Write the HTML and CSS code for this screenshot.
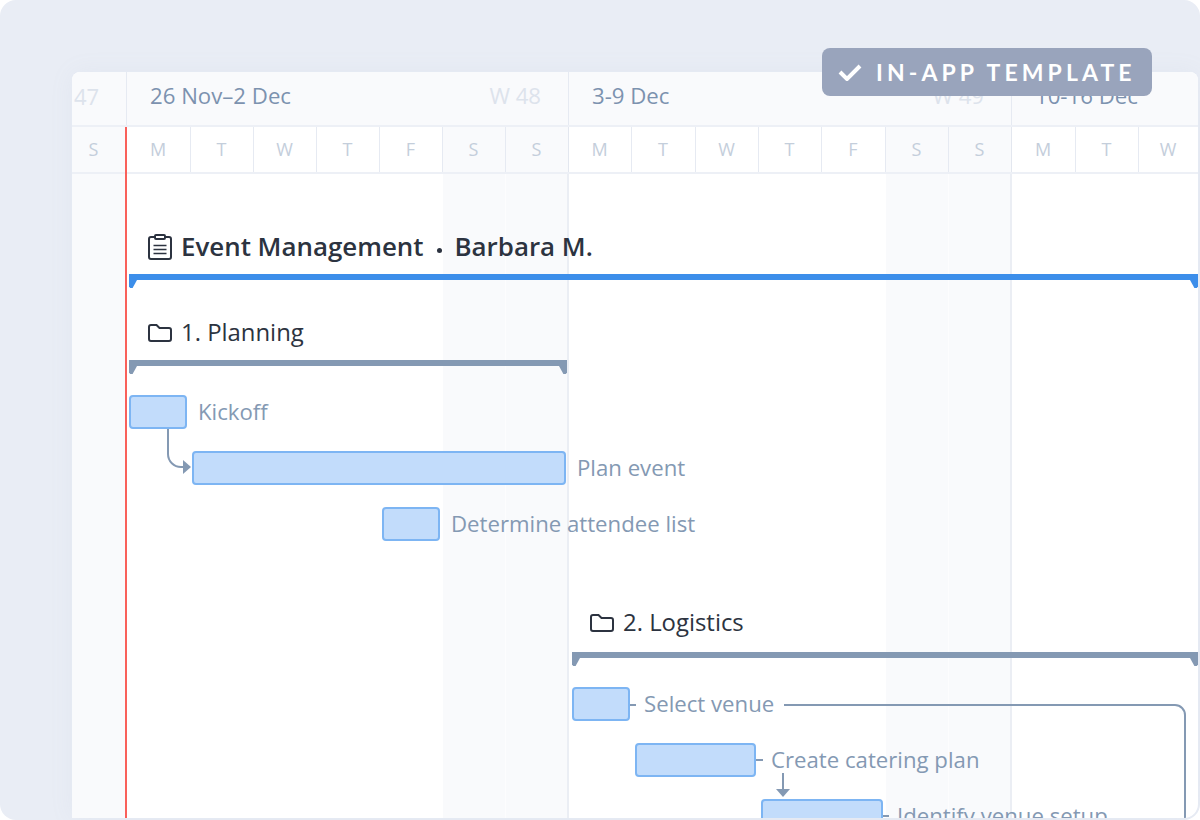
FILE: index.html
```html
<!DOCTYPE html>
<html lang="en">
<head>
<meta charset="utf-8">
<title>Event Management template</title>
<link rel="stylesheet" href="styles.css">
</head>
<body>
<main class="stage">
  <section class="chart">
    <div class="weeks">
      <div class="week week-stub"><span class="week-no">47</span></div>
      <div class="week"><span class="week-name">26 Nov–2 Dec</span><span class="week-no">W 48</span></div>
      <div class="week"><span class="week-name">3-9 Dec</span><span class="week-no">W 49</span></div>
      <div class="week week-last"><span class="week-name">10-16 Dec</span></div>
    </div>
    <div class="days">
      <div class="day day-off day-stub month-end">S</div>
      <div class="day">M</div><div class="day">T</div><div class="day">W</div><div class="day">T</div><div class="day">F</div><div class="day day-off">S</div><div class="day day-off month-end">S</div>
      <div class="day">M</div><div class="day">T</div><div class="day">W</div><div class="day">T</div><div class="day">F</div><div class="day day-off">S</div><div class="day day-off month-end">S</div>
      <div class="day">M</div><div class="day">T</div><div class="day">W</div>
    </div>
    <div class="timeline">
      <div class="columns">
        <div class="col col-stub"></div>
        <div class="col"></div><div class="col"></div><div class="col"></div><div class="col"></div><div class="col"></div><div class="col col-off"></div><div class="col col-off col-end"></div>
        <div class="col"></div><div class="col"></div><div class="col"></div><div class="col"></div><div class="col"></div><div class="col col-off"></div><div class="col col-off col-end"></div>
        <div class="col"></div><div class="col"></div><div class="col"></div>
      </div>

      <svg class="links" viewBox="72 174 1126 644" aria-hidden="true">
        <path class="link" d="M168 429V454a13 13 0 0 0 13 13H185"/>
        <path class="head" d="M183 460L191 467L183 474Z"/>
        <path class="link" d="M630 705H636M784 705H1175a10 10 0 0 1 10 10V818"/>
        <path class="link" d="M756 760H763M883 816H889"/>
        <path class="link" d="M783 773V790"/>
        <path class="head" d="M776 789H790L783 797Z"/>
      </svg>

      <h2 class="heading project">
        <svg class="ico ico-board" viewBox="0 0 24 26" aria-hidden="true">
          <path d="M7 3H3a2 2 0 0 0-2 2v18a2 2 0 0 0 2 2h18a2 2 0 0 0 2-2V5a2 2 0 0 0-2-2h-4"/>
          <rect x="7" y="1" width="10" height="4" rx="1"/>
          <path class="ico-lines" d="M5.5 11.5H18.5M5.5 15.5H18.5M5.5 19.5H18.5"/>
        </svg>
        <span>Event Management</span><span class="sep"></span><span>Barbara M.</span>
      </h2>
      <div class="summary summary-project"></div>

      <h3 class="heading group group-one">
        <svg class="ico ico-folder" viewBox="0 0 24 18" aria-hidden="true"><path d="M1 3a2 2 0 0 1 2-2h5.5l3 3H21a2 2 0 0 1 2 2v9a2 2 0 0 1-2 2H3a2 2 0 0 1-2-2Z"/></svg>
        <span>1. Planning</span>
      </h3>
      <div class="summary summary-one"></div>

      <div class="task t-kickoff"><div class="bar"></div><span>Kickoff</span></div>
      <div class="task t-plan"><div class="bar"></div><span>Plan event</span></div>
      <div class="task t-attendee"><div class="bar"></div><span>Determine attendee list</span></div>

      <h3 class="heading group group-two">
        <svg class="ico ico-folder" viewBox="0 0 24 18" aria-hidden="true"><path d="M1 3a2 2 0 0 1 2-2h5.5l3 3H21a2 2 0 0 1 2 2v9a2 2 0 0 1-2 2H3a2 2 0 0 1-2-2Z"/></svg>
        <span>2. Logistics</span>
      </h3>
      <div class="summary summary-two"></div>

      <div class="task t-venue"><div class="bar"></div><span>Select venue</span></div>
      <div class="task t-catering"><div class="bar"></div><span>Create catering plan</span></div>
      <div class="task t-setup"><div class="bar"></div><span>Identify venue setup</span></div>
    </div>
    <div class="today"></div>
  </section>
  <div class="badge">
    <svg class="badge-check" viewBox="0 0 24 18" aria-hidden="true"><path d="M2 9L9 16L22 3"/></svg>
    <span>IN-APP TEMPLATE</span>
  </div>
</main>
</body>
</html>
```

FILE: styles.css
```css
* { box-sizing: border-box; }
html, body { margin: 0; height: 100%; background: #fff; }
body { width: 1200px; height: 820px; overflow: hidden; font-family: "Open Sans", sans-serif; }

.stage {
  position: relative;
  width: 1200px;
  height: 820px;
  padding: 72px 2px 2px 72px;
  background: #e9edf5;
  border-radius: 16px;
  overflow: hidden;
}

.chart {
  position: relative;
  display: flex;
  flex-direction: column;
  height: 100%;
  background: #fff;
  border-radius: 8px 8px 14px 0;
  overflow: hidden;
  box-shadow: 0 0 24px rgba(150, 165, 195, .08);
}

.weeks {
  display: grid;
  grid-template-columns: 55px 442px 443px 1fr;
  height: 55px;
  background: #f9fafc;
  border-bottom: 2px solid #edf0f6;
}
.week {
  display: flex;
  align-items: center;
  justify-content: space-between;
  padding: 0 27px 7px 23px;
  border-right: 1px solid #e6eaf2;
  font-size: 22.2px;
}
.week-stub { padding: 0 0 5px 2px; font-size: 22px; }
.week-last { border-right: 0; }
.week-name { color: #7c92af; }
.week-no { color: #dde3ec; }

.days {
  display: grid;
  grid-template-columns: 55px 64px 63px 63px 63px 63px 63px 63px 63px 64px 63px 63px 64px 63px 63px 64px 63px 1fr;
  height: 47px;
  border-bottom: 2px solid #edf0f6;
}
.day {
  display: flex;
  align-items: center;
  justify-content: center;
  padding: 0 1px 1px 0;
  border-right: 1px solid #e6eaf2;
  color: #c4cedb;
  font-size: 18px;
}
.day:last-child { border-right: 0; }
.day-off { background: #f9fafc; }
.day-stub { padding-right: 11px; }
.month-end { border-right-color: #e3e7ef; }

.timeline { position: relative; flex: 1; min-height: 0; overflow: hidden; }
.columns {
  position: absolute;
  inset: 0;
  display: grid;
  grid-template-columns: 55px 64px 63px 63px 63px 63px 63px 63px 63px 64px 63px 63px 64px 63px 63px 64px 63px 1fr;
}
.col-stub { background: #f9fafc; border-right: 1px solid #e6eaf2; }
.col-off { background: #f9fafc; border-right: 1px solid #fdfdfe; }
.col-end { border-right: 2px solid #ebeef4; }

.links { position: absolute; inset: 0; width: 1126px; height: 644px; z-index: 1; }
.link { fill: none; stroke: #8499b3; stroke-width: 2; }
.head { fill: #8499b3; }

.heading {
  position: absolute;
  left: 76px;
  display: flex;
  align-items: center;
  margin: 0;
  color: #2c3340;
  white-space: nowrap;
  z-index: 2;
}
.project { top: 54px; font-size: 25.9px; font-weight: 600; line-height: 38px; }
.project span { position: relative; top: -1px; }
.group { font-size: 23.9px; font-weight: 400; line-height: 34px; }
.group span { position: relative; top: -1px; }
.group-one { top: 142px; }
.group-two { top: 432px; left: 518px; }
.ico { flex: none; width: 24px; margin-right: 9px; fill: none; stroke: #2c3340; stroke-width: 2; }
.ico-board { height: 26px; }
.ico-lines { stroke-width: 1.6; }
.ico-folder { height: 18px; }
.project .sep {
  width: 5px;
  height: 5px;
  margin: 8px 13px 0 13px;
  background: #2c3340;
  border-radius: 50%;
}

.summary { position: absolute; height: 6px; z-index: 1; }
.summary::before, .summary::after {
  content: "";
  position: absolute;
  top: 6px;
  width: 8px;
  height: 8px;
  background: inherit;
}
.summary::before { left: 0; clip-path: polygon(0 0, 100% 0, 45% 100%, 15% 100%, 0 80%); }
.summary::after { right: 0; clip-path: polygon(0 0, 100% 0, 100% 80%, 85% 100%, 55% 100%); }
.summary-project { top: 100px; left: 57px; width: 1069px; background: #3c8eea; }
.summary-one { top: 186px; left: 57px; width: 438px; background: #8499b3; }
.summary-two { top: 478px; left: 500px; width: 626px; background: #8499b3; }

.task {
  position: absolute;
  display: flex;
  align-items: center;
  height: 34px;
  color: #8499b3;
  font-size: 22.2px;
  white-space: nowrap;
  z-index: 2;
}
.task span { margin-bottom: 1px; }
.bar {
  flex: none;
  height: 34px;
  margin-right: 11px;
  background: #c2dcfb;
  border: 2px solid #7db5f3;
  border-radius: 4px;
}
.t-kickoff { top: 221px; left: 57px; }
.t-kickoff .bar { width: 58px; }
.t-plan { top: 277px; left: 120px; }
.t-plan .bar { width: 374px; }
.t-attendee { top: 333px; left: 310px; }
.t-attendee .bar { width: 58px; margin-right: 11px; }
.t-venue { top: 513px; left: 500px; }
.t-venue .bar { width: 58px; margin-right: 14px; }
.t-catering { top: 569px; left: 563px; }
.t-catering .bar { width: 121px; margin-right: 15px; }
.t-setup { top: 625px; left: 689px; }
.t-setup .bar { width: 122px; margin-right: 14px; }

.today {
  position: absolute;
  top: 55px;
  bottom: 0;
  left: 53px;
  width: 2px;
  background: #f9605a;
  z-index: 3;
}

.badge {
  position: absolute;
  top: 48px;
  left: 822px;
  display: flex;
  align-items: center;
  width: 330px;
  height: 48px;
  padding-left: 16px;
  background: #99a4bc;
  border-radius: 8px;
  color: #fff;
  font-family: Lato, sans-serif;
  font-size: 23px;
  font-weight: 700;
  letter-spacing: 4.1px;
  white-space: nowrap;
  z-index: 5;
}
.badge-check {
  flex: none;
  width: 24px;
  height: 18px;
  margin-right: 14px;
  fill: none;
  stroke: #fff;
  stroke-width: 4;
}
```
